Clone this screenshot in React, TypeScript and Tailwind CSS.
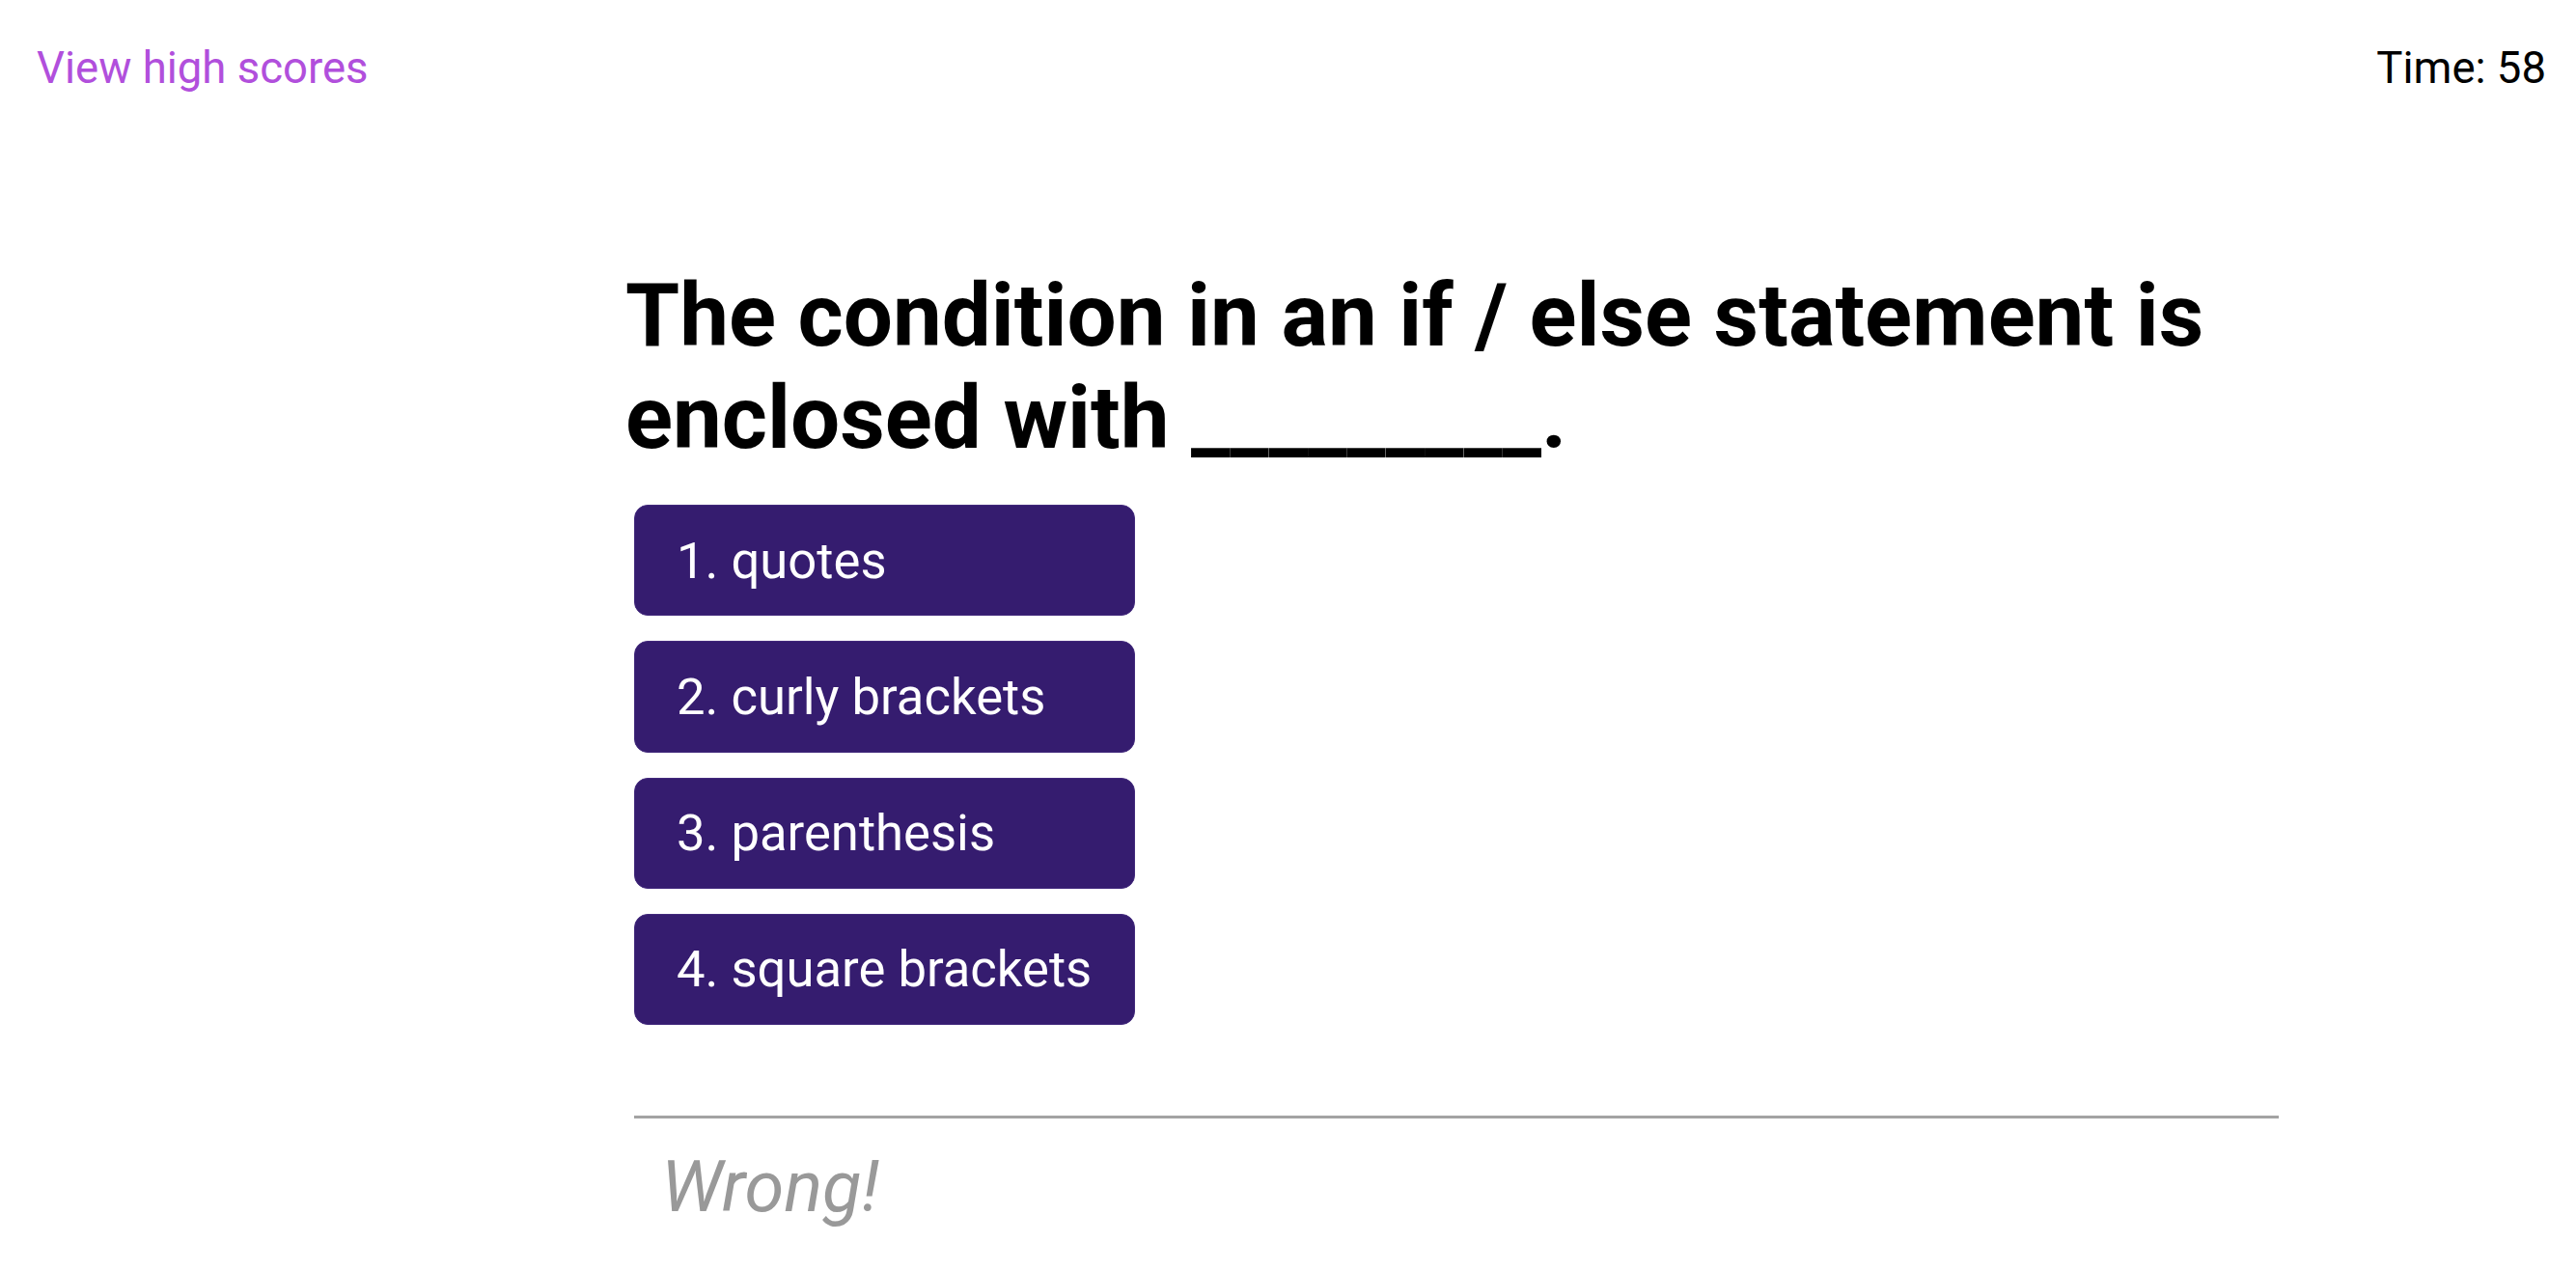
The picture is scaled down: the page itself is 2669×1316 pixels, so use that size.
import React from 'react';

const choices = ['1. quotes', '2. curly brackets', '3. parenthesis', '4. square brackets'];

export default function App() {
  return (
    <div className="min-h-screen bg-white text-black font-['Roboto',sans-serif]">
      <header className="flex items-start justify-between pl-[38px] pr-[31px] pt-[44px] text-[45.5px] leading-[normal]">
        <a href="#" className="text-[#b14fdc]">View high scores</a>
        <span>Time: 58</span>
      </header>

      <main className="ml-[648px] w-[1713px] mt-[177px]">
        <h1 className="text-[90.7px] font-bold leading-[1.17]">
          The condition in an if / else statement is enclosed with _________.
        </h1>

        <div className="mt-[37px] flex flex-col gap-[26px] pl-[9px]">
          {choices.map((c) => (
            <button
              key={c}
              className="w-[519px] rounded-[14px] border border-[#42297c] bg-[#351c6f] py-[25.6px] pl-[43px] text-left text-[52.6px] leading-[normal] text-white"
            >
              {c}
            </button>
          ))}
        </div>

        <div className="ml-[9px] mt-[94px] border-t-[3px] border-[#a3a3a3] pt-[27px] pl-[28px]">
          <p className="text-[74px] italic leading-[normal] text-[#999999]">Wrong!</p>
        </div>
      </main>
    </div>
  );
}
